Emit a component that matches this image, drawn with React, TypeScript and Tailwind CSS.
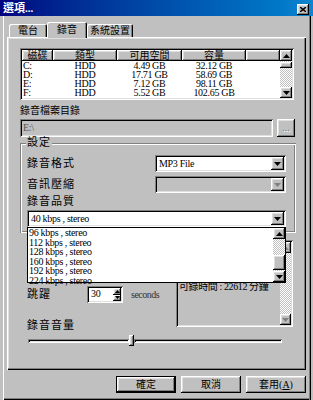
const raised =
  'bg-[#c0c0c0] shadow-[inset_-1px_-1px_#000,inset_1px_1px_#fff,inset_-2px_-2px_#808080,inset_2px_2px_#dfdfdf]';
const sunken =
  'shadow-[inset_1px_1px_#808080,inset_-1px_-1px_#fff,inset_2px_2px_#000,inset_-2px_-2px_#dfdfdf]';
const etched =
  'shadow-[inset_1px_1px_#808080,inset_-1px_-1px_#fff,inset_2px_2px_#fff,inset_-2px_-2px_#808080]';
const dither = 'bg-[repeating-conic-gradient(#fff_0_25%,#c0c0c0_0_50%)] bg-[length:2px_2px]';
const latin = 'text-[10px] tracking-[-0.3px]';
const label = 'text-[11px] tracking-[1px] leading-[11px]';

const drives = [
  { id: 'C:', free: '4.49 GB', size: '32.12 GB' },
  { id: 'D:', free: '17.71 GB', size: '58.69 GB' },
  { id: 'E:', free: '7.12 GB', size: '98.11 GB' },
  { id: 'F:', free: '5.52 GB', size: '102.65 GB' },
];

const rates = ['96', '112', '128', '160', '192', '224'];

function Arrow({ up, dim }: { up?: boolean; dim?: boolean }) {
  return (
    <svg width="7" height="4" viewBox="0 0 7 4" className="block">
      <polygon points={up ? '0,4 7,4 3.5,0' : '0,0 7,0 3.5,4'} fill={dim ? '#808080' : '#000'} />
    </svg>
  );
}

function ScrollBtn({ up, dim, className }: { up?: boolean; dim?: boolean; className: string }) {
  return (
    <div className={`flex shrink-0 items-center justify-center ${raised} ${className}`}>
      <Arrow up={up} dim={dim} />
    </div>
  );
}

function Combo({ text, disabled }: { text?: string; disabled?: boolean }) {
  return (
    <div className={`flex h-[17px] w-full p-[2px] ${sunken}`}>
      <div
        className={`flex flex-1 items-center pl-[2px] ${latin} ${disabled ? 'bg-[#c0c0c0]' : 'bg-white'}`}
      >
        {text}
      </div>
      <ScrollBtn dim={disabled} className="w-[13px]" />
    </div>
  );
}

function TitleBar() {
  return (
    <div className="flex h-[16px] items-start justify-between bg-linear-to-r from-[#000080] to-[#1084d0] pl-[3px] pr-[4px] pt-[3px]">
      <span className="text-[11px] font-bold leading-[11px] text-white">選項...</span>
      <div className={`mt-[1px] flex h-[11px] w-[12px] items-center justify-center ${raised}`}>
        <svg width="6" height="5" viewBox="0 0 6 5">
          <path d="M0 0L6 5M6 0L0 5" stroke="#000" strokeWidth="1.4" />
        </svg>
      </div>
    </div>
  );
}

function Tab({ text, active, w }: { text: string; active?: boolean; w: string }) {
  return (
    <div
      className={`flex items-center justify-center rounded-t-[2px] bg-[#c0c0c0] shadow-[inset_1px_1px_#fff,inset_-1px_0_#000,inset_-2px_0_#808080] ${w} ${
        active ? 'relative z-10 -mb-[1px] h-[16px]' : 'h-[13px]'
      }`}
    >
      {text}
    </div>
  );
}

function DriveList() {
  const cols = ['w-[31px]', 'w-[64px]', 'w-[65px]', 'w-[64px]', 'w-[34px]'];
  return (
    <div className={`flex h-[52px] w-[274px] p-[2px] ${sunken}`}>
      <div className="flex flex-1 flex-col bg-white">
        <div className="flex h-[11px]">
          {['磁碟', '類型', '可用空間', '容量', ''].map((h, i) => (
            <div key={i} className={`flex items-center justify-center ${cols[i]} ${raised}`}>
              {h}
            </div>
          ))}
        </div>
        {drives.map((d) => (
          <div key={d.id} className={`flex h-[9px] items-center leading-[9px] ${latin}`}>
            <div className="w-[31px] pl-[1px]">{d.id}</div>
            <div className="w-[64px] text-center">HDD</div>
            <div className="w-[65px] text-center">{d.free}</div>
            <div className="w-[64px] text-center">{d.size}</div>
          </div>
        ))}
      </div>
      <div className="flex w-[12px] flex-col">
        <ScrollBtn up className="h-[11px]" />
        <div className={`h-[1px] ${dither}`} />
        <div className={`h-[6px] ${raised}`} />
        <div className={`flex-1 ${dither}`} />
        <ScrollBtn className="h-[11px]" />
      </div>
    </div>
  );
}

function QualityDrop() {
  return (
    <div className="absolute left-0 top-[17px] z-10 flex h-[56px] w-[259px] border border-black bg-white">
      <div className="flex-1 pl-[1px]">
        {rates.map((r) => (
          <div key={r} className={`flex h-[9.6px] items-center leading-[9.6px] ${latin}`}>
            {r} kbps , stereo
          </div>
        ))}
      </div>
      <div className="flex w-[12px] flex-col">
        <ScrollBtn up className="h-[11px]" />
        <div className={`h-[16px] ${dither}`} />
        <div className={`h-[15px] ${raised}`} />
        <div className={`flex-1 ${dither}`} />
        <ScrollBtn className="h-[11px]" />
      </div>
    </div>
  );
}

function Panel() {
  return (
    <div className="flex h-[333px] w-[299px] flex-col bg-[#c0c0c0] pl-[13px] pt-[11px] shadow-[inset_1px_1px_#fff,inset_-1px_-1px_#000,inset_-2px_-2px_#808080,inset_2px_2px_#dfdfdf]">
      <DriveList />

      <div className="mt-[5px] h-[12px] leading-[12px]">錄音檔案目錄</div>
      <div className="mt-[2px] flex gap-[4px]">
        <div className={`flex h-[18px] w-[253px] items-center p-[2px] pl-[3px] text-[#555] ${latin} ${sunken}`}>
          E:\
        </div>
        <div
          className={`flex h-[18px] w-[18px] items-end justify-center pb-[4px] text-[10px] text-[#808080] [text-shadow:1px_1px_#fff] ${raised}`}
        >
          ...
        </div>
      </div>

      {/* 設定 group */}
      <div className={`mt-[6px] flex h-[90px] w-[276px] flex-col ${etched}`}>
        <div className={`-mt-[6px] ml-[6px] h-[11px] w-fit bg-[#c0c0c0] px-[1px] ${label}`}>設定</div>
        <div className="ml-[7px] mt-[7px] flex h-[17px] items-center">
          <div className={`w-[128px] ${label}`}>錄音格式</div>
          <div className="w-[131px]">
            <Combo text="MP3 File" />
          </div>
        </div>
        <div className="ml-[7px] mt-[4px] flex h-[17px] items-center">
          <div className={`w-[128px] ${label}`}>音訊壓縮</div>
          <div className="w-[131px]">
            <Combo disabled />
          </div>
        </div>
        <div className={`ml-[7px] mt-[3px] h-[12px] ${label}`}>錄音品質</div>
        <div className="relative ml-[7px] mt-[2px] w-[259px]">
          <Combo text="40 kbps , stereo" />
          <QualityDrop />
        </div>
      </div>

      <div className="flex items-start">
        <div className="ml-[7px] flex w-[149px] flex-col">
          <div className="mt-[53px] flex h-[17px] items-center">
            <div className={`w-[60px] ${label}`}>跳躍</div>
            <div className={`flex h-[17px] w-[36px] p-[2px] ${sunken}`}>
              <div className={`flex-1 bg-white pl-[2px] pt-[1px] ${latin}`}>30</div>
              <div className="flex w-[8px] flex-col">
                <div className={`flex flex-1 items-center justify-center ${raised}`}>
                  <svg width="5" height="3" viewBox="0 0 5 3">
                    <polygon points="0,3 5,3 2.5,0" fill="#000" />
                  </svg>
                </div>
                <div className={`flex flex-1 items-center justify-center ${raised}`}>
                  <svg width="5" height="3" viewBox="0 0 5 3">
                    <polygon points="0,0 5,0 2.5,3" fill="#000" />
                  </svg>
                </div>
              </div>
            </div>
            <span className="ml-[8px] text-[10px] tracking-[-0.5px] text-[#333]">seconds</span>
          </div>
          <div className={`mt-[17px] h-[11px] ${label}`}>錄音音量</div>
        </div>

        <div className={`mt-[7px] flex h-[87px] w-[117px] p-[2px] ${sunken}`}>
          <div className="flex-1 overflow-hidden whitespace-nowrap pl-[1px] pt-[40px] text-[10px] tracking-[-0.4px]">
            可錄時間 : 22612 分鐘
          </div>
          <div className="flex w-[11px] flex-col">
            <ScrollBtn up dim className="h-[11px]" />
            <div className={`flex-1 ${dither}`} />
            <ScrollBtn dim className="h-[11px]" />
          </div>
        </div>
      </div>

      {/* volume slider */}
      <div className="ml-[8px] mt-[4px] flex h-[11px] w-[254px] items-center">
        <div className={`h-[4px] w-[101px] ${sunken}`} />
        <div className={`h-[11px] w-[5px] ${raised}`} />
        <div className={`h-[4px] flex-1 ${sunken}`} />
      </div>
    </div>
  );
}

export default function App() {
  return (
    <div className="h-[400px] w-[313px] overflow-hidden bg-[#c0c0c0] font-['Liberation_Serif','Noto_Sans_CJK_TC',serif] text-[10px] leading-none text-black">
      <TitleBar />
      <div className="ml-[3px] h-[384px] w-[308px] border-l border-white pl-[3px] shadow-[inset_-1px_0_#000,inset_-2px_0_#808080,inset_0_-1px_#000,inset_0_-2px_#808080]">
        <div className="flex h-[21px] items-end pl-[2px]">
          <Tab text="電台" w="w-[38px]" />
          <Tab text="錄音" w="w-[40px]" active />
          <Tab text="系統設置" w="w-[46px]" />
        </div>
        <Panel />
        <div className="mt-[6px] flex w-[299px] justify-end gap-[5px]">
          <div className="h-[17px] w-[60px] border border-black">
            <div className={`flex h-full items-center justify-center ${raised}`}>確定</div>
          </div>
          <div className={`flex h-[17px] w-[60px] items-center justify-center ${raised}`}>取消</div>
          <div className={`flex h-[17px] w-[60px] items-center justify-center ${raised}`}>
            套用(<u>A</u>)
          </div>
        </div>
      </div>
    </div>
  );
}
